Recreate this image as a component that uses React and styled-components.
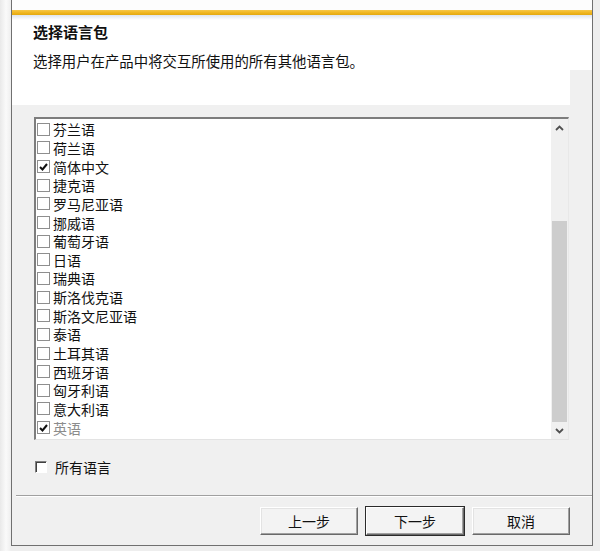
import React from "react"
import styled, { createGlobalStyle } from "styled-components"

const GlobalStyle = createGlobalStyle`
  html, body {
    margin: 0;
    padding: 0;
    background: #f4f4f4;
  }
  body {
    font-family: "Noto Sans CJK SC", "Microsoft YaHei", sans-serif;
    color: #111;
  }
`

const Page = styled.div`
  width: 600px;
  height: 551px;
  display: flex;
  background: linear-gradient(to right, #e9e9e9 0, #fafafa 6px, #eeeeee 11px);
`

const Frame = styled.div`
  width: 580px;
  height: 545px;
  border-left: 1px solid #707070;
  border-right: 1px solid #707070;
  border-bottom: 1px solid #707070;
  margin-left: 11px;
  background: #f0f0f0;
  display: flex;
  flex-direction: column;
`

const TopStrip = styled.div`
  height: 10px;
  background: #fdfdfd;
`

const AccentBar = styled.div`
  height: 5px;
  background: linear-gradient(to bottom, #f7c84a 0, #efb41c 60%, #e3a912 100%);
`

const Header = styled.div`
  height: 90px;
  display: grid;
  grid-template-columns: 1fr 22px;
  background: #ffffff;
`

const HeaderMain = styled.div`
  padding: 7px 0 0 21px;
  background: linear-gradient(to bottom, #dfe4ec 0, #ffffff 5px);
`

const HeaderSide = styled.div`
  background: linear-gradient(to bottom, #dfe4ec 0, #ffffff 5px, #ffffff 55px, #f0f0f0 55px);
`

const Title = styled.h1`
  margin: 0;
  font-size: 15px;
  line-height: 20px;
  font-weight: 700;
`

const Subtitle = styled.p`
  margin: 9px 0 0;
  font-size: 14.4px;
  line-height: 20px;
  font-weight: 400;
`

const Body = styled.div`
  flex: 1;
  display: flex;
  flex-direction: column;
  padding-top: 12px;
`

const ListBox = styled.div`
  margin-left: 22px;
  width: 532px;
  height: 320px;
  display: flex;
  background: #ffffff;
  border-top: 2px solid #7d7d7d;
  border-left: 2px solid #7d7d7d;
  border-right: 1px solid #e8e8e8;
  border-bottom: 1px solid #e3e3e3;
`

const Items = styled.ul`
  flex: 1;
  list-style: none;
  margin: 0;
  padding: 1px 0 0 1px;
`

const Item = styled.li`
  height: 18.65px;
  display: flex;
  align-items: center;
  gap: 3px;
  font-size: 14px;
  line-height: 18px;
  color: ${p => (p.$disabled ? "#8c8c8c" : "#111")};
`

const Box = styled.span`
  width: 11px;
  height: 11px;
  border: 1px solid #8e8e8e;
  background: #fff;
  display: flex;
  align-items: center;
  justify-content: center;
  flex-shrink: 0;
`

const Scrollbar = styled.div`
  width: 17px;
  display: flex;
  flex-direction: column;
  background: #f0f0f0;
`

const ArrowButton = styled.div`
  height: 17px;
  display: flex;
  align-items: center;
  justify-content: center;
  flex-shrink: 0;
`

const Track = styled.div`
  flex: 1;
  display: flex;
  flex-direction: column;
  padding-top: ${p => p.$offset}px;
`

const Thumb = styled.div`
  flex: 1;
  margin: 0 1px;
  background: #cdcdcd;
`

const AllRow = styled.label`
  margin: 17px 0 0 23px;
  display: flex;
  align-items: center;
  gap: 8px;
  font-size: 14px;
  line-height: 20px;
`

const ClassicBox = styled.span`
  width: 10px;
  height: 10px;
  border-top: 1px solid #808080;
  border-left: 1px solid #808080;
  border-right: 1px solid #ffffff;
  border-bottom: 1px solid #ffffff;
  box-shadow: inset 1px 1px 0 #404040;
  background: #fff;
`

const Separator = styled.hr`
  margin: 18px 0 0 4px;
  height: 0;
  border: none;
  border-top: 1px solid #a0a0a0;
  border-bottom: 1px solid #ffffff;
`

const ButtonRow = styled.div`
  display: flex;
  justify-content: flex-end;
  gap: 8px;
  margin-top: 10px;
  padding-right: 22px;
`

const Button = styled.button`
  width: 98px;
  height: 28px;
  padding: 0;
  font-family: inherit;
  font-size: 14px;
  color: #111;
  background: #f3f3f3;
  border-top: 1px solid #ffffff;
  border-left: 1px solid #ffffff;
  border-right: 1px solid #696969;
  border-bottom: 1px solid #696969;
  box-shadow: ${p =>
    p.$default
      ? "0 0 0 1px #2a2a2a, inset -1px -1px 0 #a0a0a0"
      : "inset -1px -1px 0 #a0a0a0, inset 1px 1px 0 #e3e3e3"};
`

const Check = () => (
  <svg width="9" height="8" viewBox="0 0 9 8">
    <path d="M1 4 L3.5 6.5 L8 1" fill="none" stroke="#111" strokeWidth="2" />
  </svg>
)

const Chevron = ({ up }) => (
  <svg width="9" height="6" viewBox="0 0 9 6">
    <path
      d={up ? "M1 5 L4.5 1.5 L8 5" : "M1 1 L4.5 4.5 L8 1"}
      fill="none"
      stroke="#505050"
      strokeWidth="1.8"
    />
  </svg>
)

const languages = [
  { name: "芬兰语" },
  { name: "荷兰语" },
  { name: "简体中文", checked: true },
  { name: "捷克语" },
  { name: "罗马尼亚语" },
  { name: "挪威语" },
  { name: "葡萄牙语" },
  { name: "日语" },
  { name: "瑞典语" },
  { name: "斯洛伐克语" },
  { name: "斯洛文尼亚语" },
  { name: "泰语" },
  { name: "土耳其语" },
  { name: "西班牙语" },
  { name: "匈牙利语" },
  { name: "意大利语" },
  { name: "英语", checked: true, disabled: true },
]

const App = () => (
  <Page>
    <GlobalStyle />
    <Frame>
      <TopStrip />
      <AccentBar />
      <Header>
        <HeaderMain>
          <Title>选择语言包</Title>
          <Subtitle>选择用户在产品中将交互所使用的所有其他语言包。</Subtitle>
        </HeaderMain>
        <HeaderSide />
      </Header>
      <Body>
        <ListBox>
          <Items>
            {languages.map(lang => (
              <Item key={lang.name} $disabled={lang.disabled}>
                <Box>{lang.checked && <Check />}</Box>
                {lang.name}
              </Item>
            ))}
          </Items>
          <Scrollbar>
            <ArrowButton>
              <Chevron up />
            </ArrowButton>
            <Track $offset={85}>
              <Thumb />
            </Track>
            <ArrowButton>
              <Chevron />
            </ArrowButton>
          </Scrollbar>
        </ListBox>
        <AllRow>
          <ClassicBox />
          所有语言
        </AllRow>
        <Separator />
        <ButtonRow>
          <Button>上一步</Button>
          <Button $default>下一步</Button>
          <Button>取消</Button>
        </ButtonRow>
      </Body>
    </Frame>
  </Page>
)

export default App
